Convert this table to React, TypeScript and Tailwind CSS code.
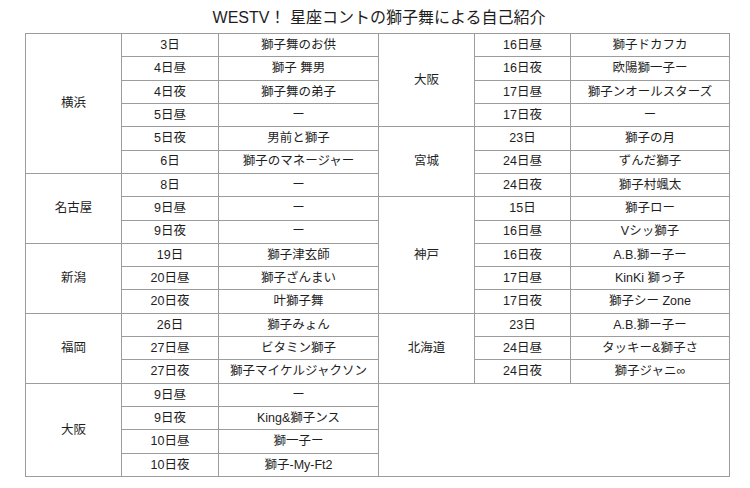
import React from "react";

type Cell = { t: string; span?: string };

const rows: Cell[][] = [
  [{ t: "横浜", span: "row-span-6" }, { t: "3日" }, { t: "獅子舞のお供" }, { t: "大阪", span: "row-span-4" }, { t: "16日昼" }, { t: "獅子ドカフカ" }],
  [{ t: "4日昼" }, { t: "獅子 舞男" }, { t: "16日夜" }, { t: "欧陽獅一子ー" }],
  [{ t: "4日夜" }, { t: "獅子舞の弟子" }, { t: "17日昼" }, { t: "獅子ンオールスターズ" }],
  [{ t: "5日昼" }, { t: "ー" }, { t: "17日夜" }, { t: "ー" }],
  [{ t: "5日夜" }, { t: "男前と獅子" }, { t: "宮城", span: "row-span-3" }, { t: "23日" }, { t: "獅子の月" }],
  [{ t: "6日" }, { t: "獅子のマネージャー" }, { t: "24日昼" }, { t: "ずんだ獅子" }],
  [{ t: "名古屋", span: "row-span-3" }, { t: "8日" }, { t: "ー" }, { t: "24日夜" }, { t: "獅子村颯太" }],
  [{ t: "9日昼" }, { t: "ー" }, { t: "神戸", span: "row-span-5" }, { t: "15日" }, { t: "獅子ロー" }],
  [{ t: "9日夜" }, { t: "ー" }, { t: "16日昼" }, { t: "Vシッ獅子" }],
  [{ t: "新潟", span: "row-span-3" }, { t: "19日" }, { t: "獅子津玄師" }, { t: "16日夜" }, { t: "A.B.獅ー子ー" }],
  [{ t: "20日昼" }, { t: "獅子ざんまい" }, { t: "17日昼" }, { t: "KinKi 獅っ子" }],
  [{ t: "20日夜" }, { t: "叶獅子舞" }, { t: "17日夜" }, { t: "獅子シー Zone" }],
  [{ t: "福岡", span: "row-span-3" }, { t: "26日" }, { t: "獅子みょん" }, { t: "北海道", span: "row-span-3" }, { t: "23日" }, { t: "A.B.獅ー子ー" }],
  [{ t: "27日昼" }, { t: "ビタミン獅子" }, { t: "24日昼" }, { t: "タッキー&獅子さ" }],
  [{ t: "27日夜" }, { t: "獅子マイケルジャクソン" }, { t: "24日夜" }, { t: "獅子ジャニ∞" }],
  [{ t: "大阪", span: "row-span-4" }, { t: "9日昼" }, { t: "ー" }, { t: "", span: "col-span-3 row-span-4" }],
  [{ t: "9日夜" }, { t: "King&獅子ンス" }],
  [{ t: "10日昼" }, { t: "獅一子ー" }],
  [{ t: "10日夜" }, { t: "獅子-My-Ft2" }],
];

export default function App() {
  return (
    <div
      className="w-[750px] h-[488px] bg-white text-[#1e1e1e] overflow-hidden"
      style={{ fontFamily: '"Liberation Sans", "Noto Sans CJK JP", sans-serif' }}
    >
      <div className="ml-[25px] w-[705px]">
        <div className="h-[33px] flex items-center justify-center text-[16px] leading-none pl-[3px] pt-[3px]">
          WESTV！ 星座コントの獅子舞による自己紹介
        </div>
        <div className="grid grid-cols-[95px_96px_159px_95px_95px_158px] grid-rows-[repeat(19,minmax(0,1fr))] h-[444px] gap-px p-px bg-[#9c9c9c]">
          {rows.flat().map((c, i) => (
            <div
              key={i}
              className={`bg-white flex items-center justify-center text-[12.5px] leading-none whitespace-nowrap ${c.span ?? ""}`}
            >
              {c.t}
            </div>
          ))}
        </div>
      </div>
    </div>
  );
}
